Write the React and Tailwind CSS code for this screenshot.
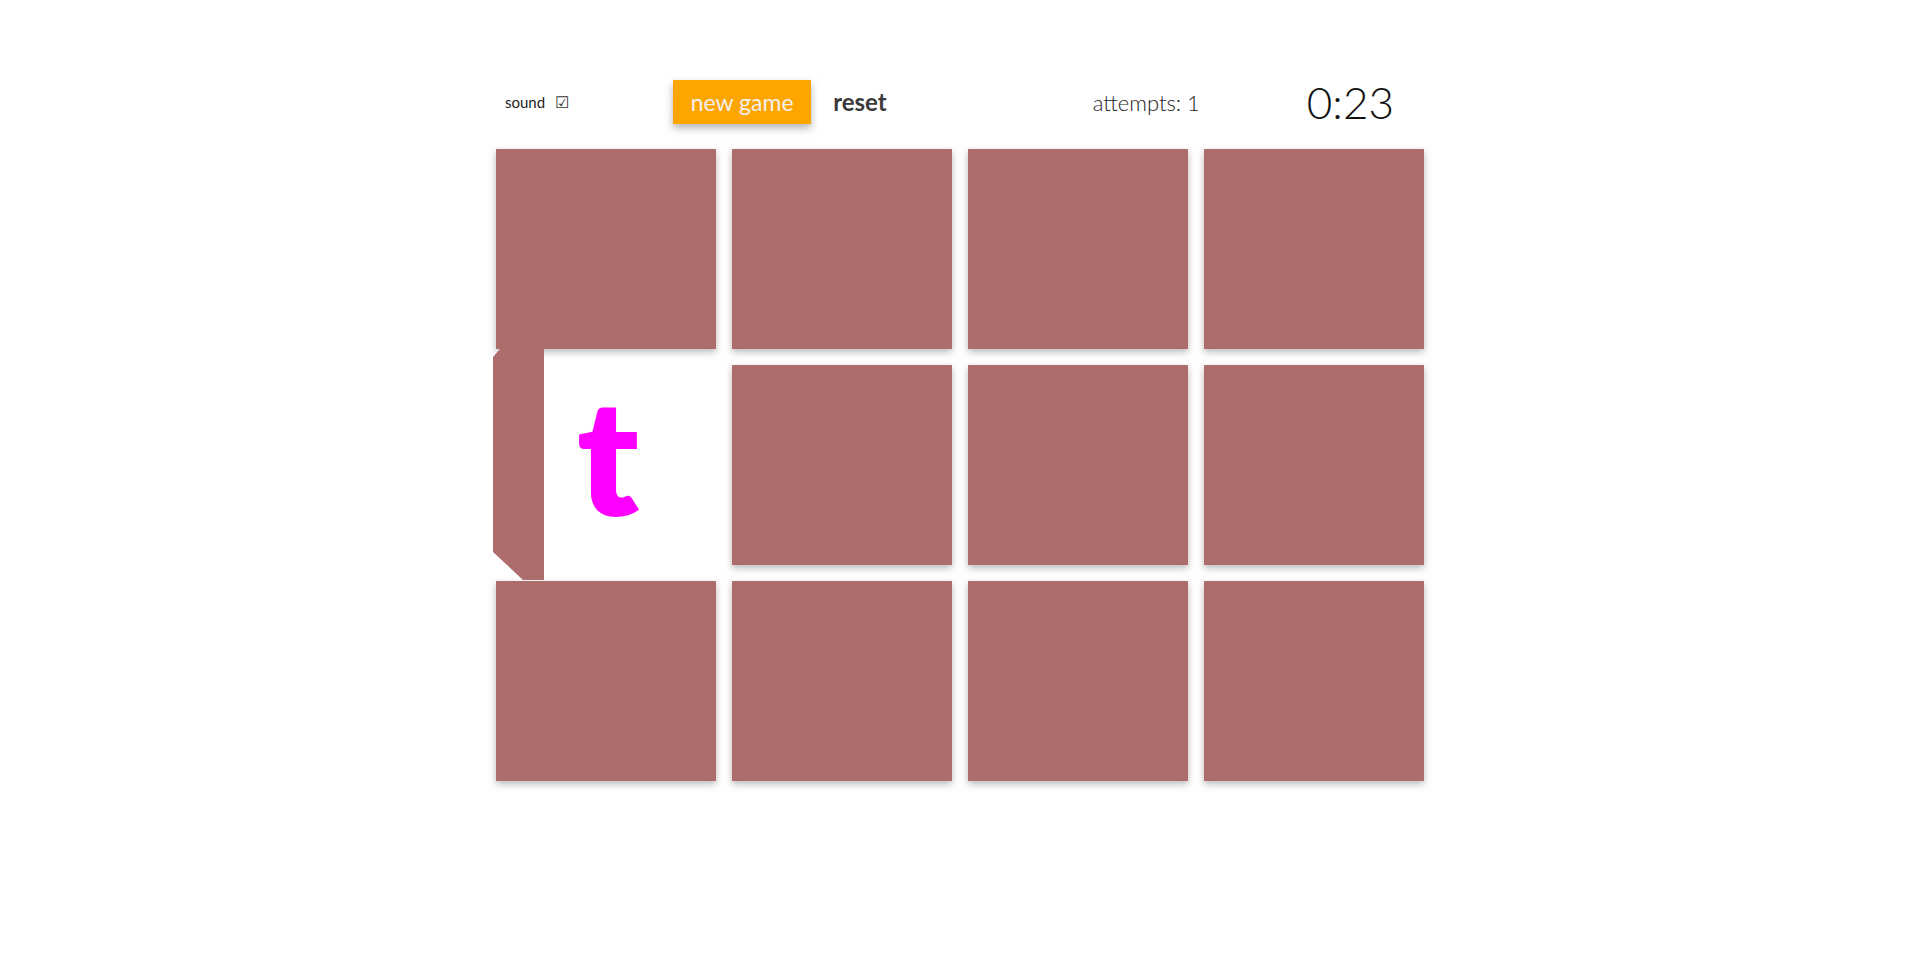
import { useState } from "react";

const cards = Array.from({ length: 12 }, (_, i) => i);

function Card({ flipped }) {
  if (flipped) {
    return (
      <div className="relative h-[200px] w-[220px]">
        {/* half turned card back */}
        <div className="absolute left-[-3px] top-[-70px] z-10 h-[285px] w-[51px] bg-[#ad6d6d] shadow-[2px_0_4px_rgba(0,0,0,0.12)] [clip-path:polygon(7px_54px,51px_0,51px_285px,30px_285px,0_257px,0_62px)]" />
        <div className="flex h-full w-full items-center justify-center pl-[4px]">
          <span className="mt-[-22px] text-[162px] font-extrabold leading-none text-[#ff00ff] [font-family:Lato,'Open_Sans',sans-serif]">
            t
          </span>
        </div>
      </div>
    );
  }
  return <div className="h-[200px] w-[220px] bg-[#ad6d6d] shadow-[0_3px_7px_rgba(0,0,0,0.28)]" />;
}

export default function App() {
  const [sound, setSound] = useState(true);

  return (
    <div className="min-h-screen bg-white pt-[80px] text-[#222] [font-family:Lato,'Open_Sans',sans-serif]">
      <div className="mx-auto w-[928px]">
        <header className="flex h-[44px] items-center">
          <button
            onClick={() => setSound(!sound)}
            className="ml-[9px] flex items-center gap-[10px] text-[15px] text-[#222]"
          >
            sound
            <span className="text-[16px] leading-none text-[#333]">{sound ? "☑" : "☐"}</span>
          </button>
          <button className="ml-[104px] h-[44px] w-[138px] bg-[#ffa500] text-[23px] text-[#f0f0f0] shadow-[0_4px_8px_rgba(0,0,0,0.3)]">
            new game
          </button>
          <button className="ml-[22px] text-[24px] font-bold text-[#3a3a3a]">reset</button>
          <div className="ml-[206px] text-[22px] font-light text-[#222]">attempts: 1</div>
          <div className="ml-[107px] text-[44px] font-light leading-none text-[#111]">0:23</div>
        </header>

        <div className="mt-[25px] grid grid-cols-[repeat(4,220px)] gap-[16px]">
          {cards.map((i) => (
            <Card key={i} flipped={i === 4} />
          ))}
        </div>
      </div>
    </div>
  );
}
